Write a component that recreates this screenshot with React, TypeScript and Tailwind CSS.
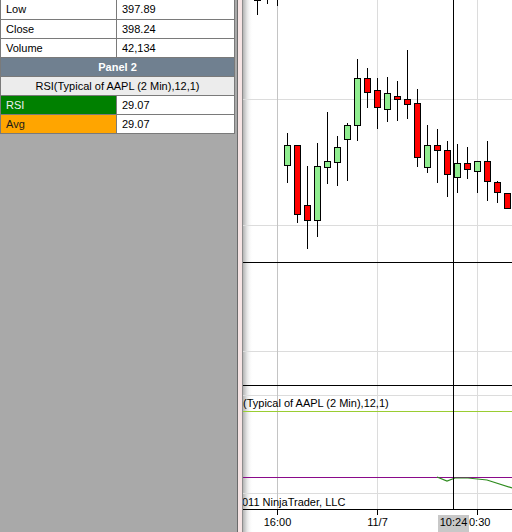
import React from 'react';

type Candle = { x: number; top: number; bottom: number; hi: number; lo: number; up: boolean };

// body top/bottom and wick high/low in screen pixels
const candles: Candle[] = [
  { x: 257, top: -30, bottom: 0, hi: -40, lo: 15, up: true },
  { x: 267, top: -30, bottom: -2, hi: -40, lo: 4, up: true },
  { x: 277, top: -30, bottom: -2, hi: -40, lo: 6, up: true },
  { x: 287, top: 145, bottom: 165, hi: 133, lo: 183, up: true },
  { x: 297, top: 145, bottom: 214, hi: 145, lo: 223, up: false },
  { x: 307, top: 205, bottom: 220, hi: 166, lo: 249, up: false },
  { x: 317, top: 166, bottom: 220, hi: 143, lo: 237, up: true },
  { x: 327, top: 161, bottom: 167, hi: 112, lo: 184, up: true },
  { x: 337, top: 147, bottom: 162, hi: 136, lo: 186, up: true },
  { x: 347, top: 125, bottom: 139, hi: 123, lo: 181, up: true },
  { x: 357, top: 78, bottom: 125, hi: 59, lo: 141, up: true },
  { x: 367, top: 78, bottom: 92, hi: 68, lo: 108, up: false },
  { x: 377, top: 90, bottom: 107, hi: 78, lo: 129, up: false },
  { x: 387, top: 93, bottom: 109, hi: 77, lo: 122, up: true },
  { x: 397, top: 96, bottom: 99, hi: 81, lo: 121, up: false },
  { x: 407, top: 99, bottom: 104, hi: 50, lo: 119, up: false },
  { x: 417, top: 103, bottom: 157, hi: 89, lo: 167, up: false },
  { x: 427, top: 145, bottom: 167, hi: 125, lo: 173, up: true },
  { x: 437, top: 145, bottom: 150, hi: 129, lo: 183, up: false },
  { x: 447, top: 150, bottom: 174, hi: 141, lo: 197, up: false },
  { x: 457, top: 163, bottom: 177, hi: 144, lo: 193, up: true },
  { x: 467, top: 163, bottom: 169, hi: 147, lo: 179, up: false },
  { x: 477, top: 161, bottom: 171, hi: 161, lo: 193, up: true },
  { x: 487, top: 161, bottom: 181, hi: 141, lo: 201, up: false },
  { x: 497, top: 182, bottom: 192, hi: 181, lo: 203, up: false },
  { x: 507, top: 193, bottom: 208, hi: 193, lo: 208, up: false },
];

const font = 'Liberation Sans, Arial, sans-serif';

function DataRow({ label, value, first, labelClass = 'bg-white text-black' }: { label: string; value: string; first?: boolean; labelClass?: string }) {
  return (
    <div className={`flex border-b border-[#7a7a7a] ${first ? 'h-[20px]' : 'h-[19px]'}`}>
      <div className={`w-[116px] border-r border-[#7a7a7a] pl-[5px] flex items-center ${labelClass}`}>{label}</div>
      <div className="flex-1 bg-white pl-[5px] flex items-center text-black">{value}</div>
    </div>
  );
}

function Chart() {
  return (
    <svg width={269} height={532} viewBox="243 0 269 532" className="block">
      <defs>
        <linearGradient id="shade" x1="0" x2="1" y1="0" y2="0">
          <stop offset="0" stopColor="#b4b4b4" />
          <stop offset="0.4" stopColor="#e4e4e4" />
          <stop offset="1" stopColor="#ffffff" stopOpacity="0" />
        </linearGradient>
      </defs>
      <rect x={243} y={0} width={269} height={532} fill="#ffffff" />
      <rect x={243} y={0} width={10} height={532} fill="url(#shade)" />

      {/* grid */}
      {[99, 225, 351, 395, 493].map(y => (
        <line key={y} x1={243} x2={512} y1={y + 0.5} y2={y + 0.5} stroke="#dcdcdc" />
      ))}
      <line x1={277.5} x2={277.5} y1={0} y2={509} stroke="#c4c4c4" />
      <line x1={377.5} x2={377.5} y1={0} y2={509} stroke="#dcdcdc" />
      <line x1={477.5} x2={477.5} y1={0} y2={509} stroke="#dcdcdc" />

      {/* candles */}
      {candles.map(c => (
        <g key={c.x}>
          <line x1={c.x + 0.5} x2={c.x + 0.5} y1={c.hi} y2={c.lo} stroke="#000" />
          <rect
            x={c.x - 2.5}
            y={c.top + 0.5}
            width={6}
            height={Math.max(c.bottom - c.top, 1)}
            fill={c.up ? '#90ee90' : '#ff0000'}
            stroke="#000"
          />
        </g>
      ))}

      {/* panel separators */}
      <line x1={243} x2={512} y1={262.5} y2={262.5} stroke="#000" />
      <line x1={243} x2={512} y1={385.5} y2={385.5} stroke="#000" />

      {/* RSI panel */}
      <text x={243} y={407} fontFamily={font} fontSize={11} fill="#000">(Typical of AAPL (2 Min),12,1)</text>
      <line x1={243} x2={512} y1={411.5} y2={411.5} stroke="#9acd32" />
      <line x1={243} x2={512} y1={477.5} y2={477.5} stroke="#8a0a8a" />
      <polyline
        points="437,477 447,481 455,478 468,478 487,480 512,488"
        fill="none"
        stroke="#2e8b1e"
        strokeWidth={1.2}
      />
      <text x={242} y={506} fontFamily={font} fontSize={11} fill="#000">011 NinjaTrader, LLC</text>

      {/* crosshair */}
      <line x1={453.5} x2={453.5} y1={0} y2={509} stroke="#000" />

      {/* time axis */}
      <line x1={243} x2={512} y1={509.5} y2={509.5} stroke="#000" />
      {[277, 377, 477].map(x => (
        <line key={x} x1={x + 0.5} x2={x + 0.5} y1={509} y2={515} stroke="#000" />
      ))}
      <text x={277.5} y={526} textAnchor="middle" fontFamily={font} fontSize={11} fill="#000">16:00</text>
      <text x={377.5} y={526} textAnchor="middle" fontFamily={font} fontSize={11} fill="#000">11/7</text>
      <text x={469} y={526} fontFamily={font} fontSize={11} fill="#000">0:30</text>
      <rect x={438} y={515} width={31} height={17} fill="#c8c8c8" />
      <text x={453.5} y={526} textAnchor="middle" fontFamily={font} fontSize={11} fill="#000">10:24</text>
    </svg>
  );
}

export default function App() {
  return (
    <div className="flex w-[512px] h-[532px] overflow-hidden bg-white font-['Liberation_Sans',Arial,sans-serif] text-[11px] leading-none">
      {/* Data box */}
      <div className="w-[237px] h-full shrink-0 bg-[#a9a9a9]">
        <div className="w-[235px] border-x border-[#7a7a7a]">
          <DataRow label="Low" value="397.89" first />
          <DataRow label="Close" value="398.24" />
          <DataRow label="Volume" value="42,134" />
          <div className="h-[19px] border-b border-[#7a7a7a] bg-[#708090] text-white font-bold flex items-center justify-center">
            Panel 2
          </div>
          <div className="h-[19px] border-b border-[#7a7a7a] bg-[#ececec] text-black flex items-center justify-center">
            RSI(Typical of AAPL (2 Min),12,1)
          </div>
          <DataRow label="RSI" value="29.07" labelClass="bg-[#008000] text-[#f0f0f0]" />
          <DataRow label="Avg" value="29.07" labelClass="bg-[#ffa500] text-[#1a1a1a]" />
        </div>
      </div>

      {/* splitter */}
      <div className="w-px h-full bg-[#6b6b6b]" />
      <div className="w-[4px] h-full bg-[#f6e4e4]" />
      <div className="w-px h-full bg-[#8c8c8c]" />

      <div className="flex-1 h-full">
        <Chart />
      </div>
    </div>
  );
}
